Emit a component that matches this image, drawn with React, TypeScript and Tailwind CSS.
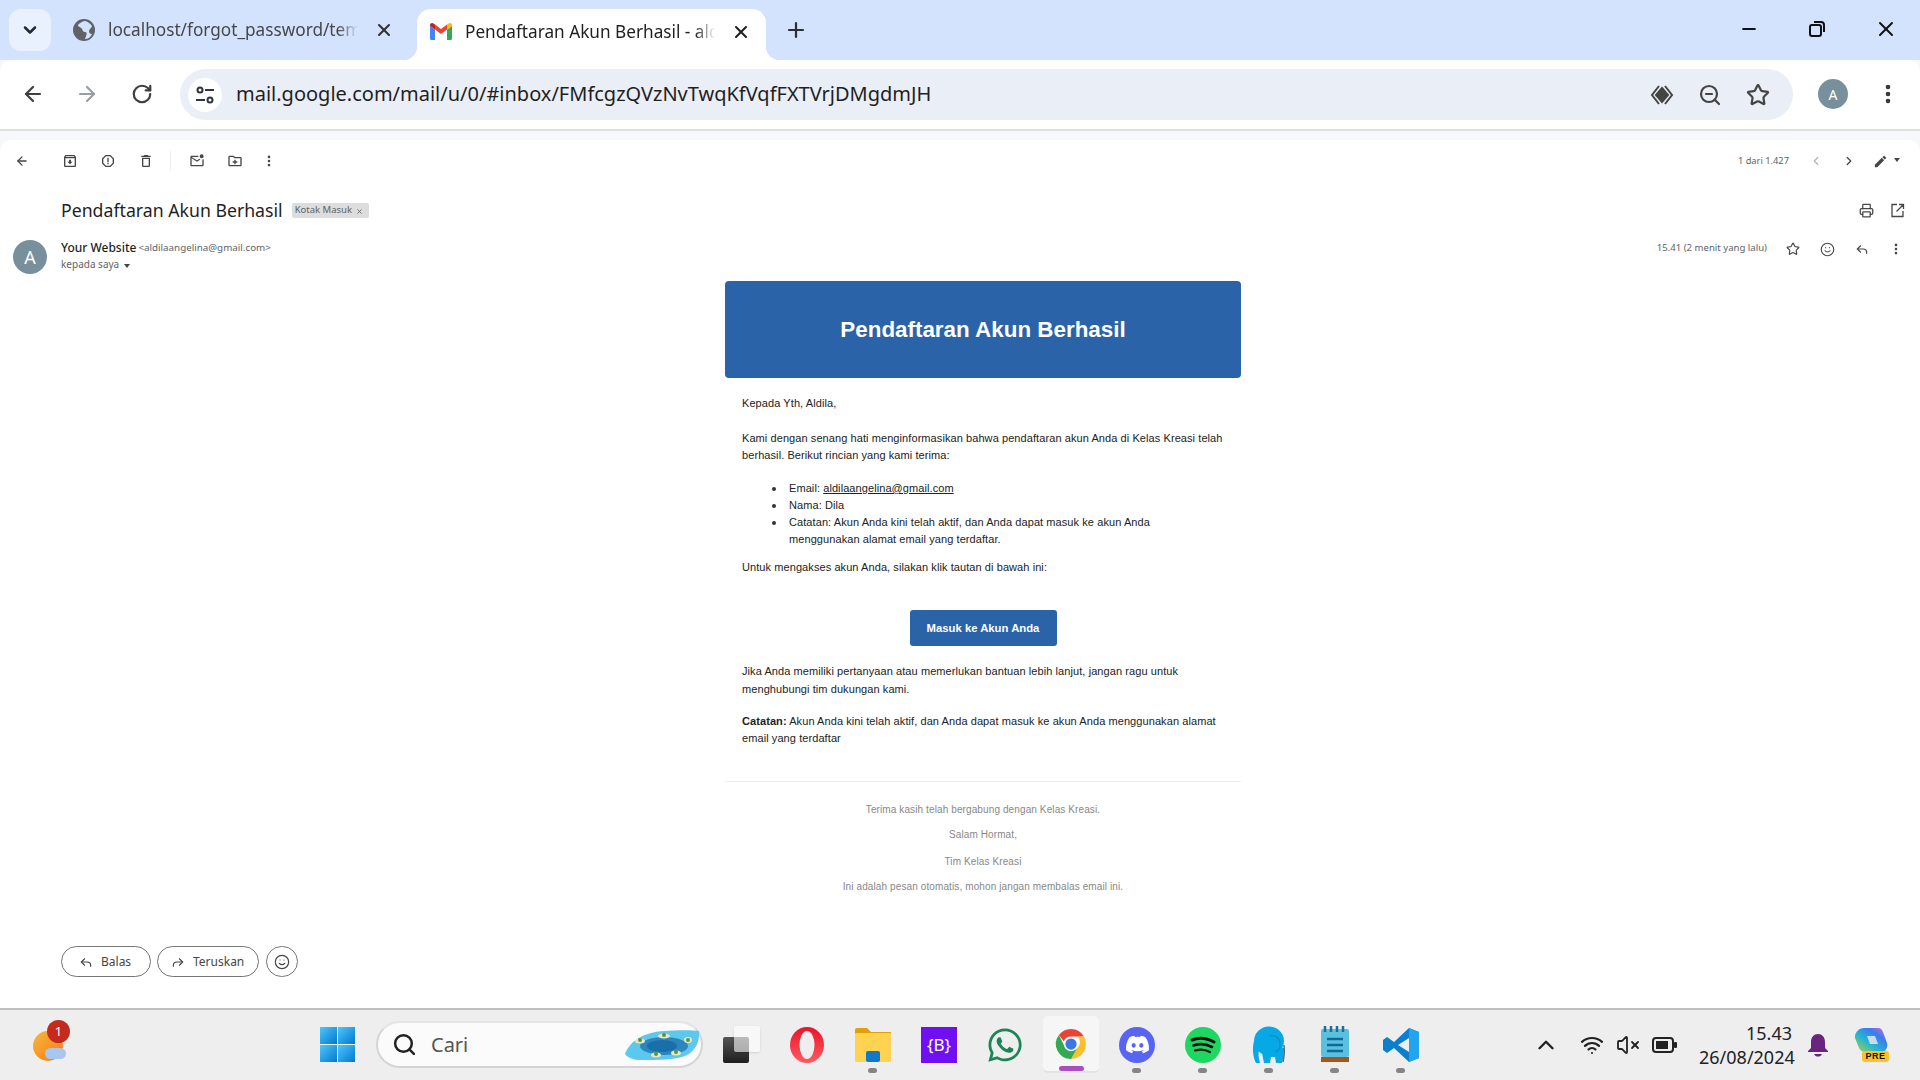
import React from "react";
import { ChevronDown, ChevronUp, ArrowLeft, ArrowRight, RotateCw, X, Plus, Minus, Star, ZoomOut, MoreVertical, Smile, Printer, ChevronLeft, ChevronRight, Search, Wifi, VolumeX } from "lucide-react";
import { FaDiscord, FaWhatsapp } from "react-icons/fa";

const UI = "font-['Noto_Sans','Open_Sans',sans-serif]";
const MAIL = "font-['Liberation_Sans',Arial,sans-serif]";

function M({ d, size = 16, className = "" }: { d: string; size?: number; className?: string }) {
  return (
    <svg width={size} height={size} viewBox="0 0 24 24" fill="currentColor" className={className}>
      <path d={d} fillRule="evenodd" />
    </svg>
  );
}

function ReplyArrow({ size = 14, flip = false }: { size?: number; flip?: boolean }) {
  return (
    <svg width={size} height={size} viewBox="0 0 24 24" fill="none" stroke="currentColor" strokeWidth="2" style={{ transform: flip ? "scaleX(-1)" : undefined }}>
      <path d="M10 6 4 12l6 6" />
      <path d="M4 12h10a6 6 0 0 1 6 6v2" />
    </svg>
  );
}

const GmailLogo = () => (
  <svg width="22" height="17" viewBox="0 0 22 17">
    <path d="M1.5 17A1.5 1.5 0 0 1 0 15.5V3l5 3.6V17z" fill="#4285f4" />
    <path d="M17 17V6.6L22 3v12.5a1.5 1.5 0 0 1-1.500 1.500z" fill="#34a853" />
    <path d="M17 1.500V6.600L22 3V2C22 .4 20 -.6 18.700 .4z" fill="#fbbc04" />
    <path d="M5 6.600V1.500L11 6l6-4.500v5.100L11 11z" fill="#ea4335" />
    <path d="M0 3V2C0 .4 2 -.6 3.300 .4L5 1.500v5.100z" fill="#c5221f" />
  </svg>
);

const Chrome = () => (
  <svg width="36" height="36" viewBox="0 0 48 48">
    <path d="M24 4a20 20 0 0 1 17.300 10H24a10 10 0 0 0-9.500 6.800L7.900 12A20 20 0 0 1 24 4z" fill="#ea4335" />
    <path d="M41.300 14A20 20 0 0 1 24 44l8.700-15a10 10 0 0 0 0-15z" fill="#fbc02d" />
    <path d="M24 44A20 20 0 0 1 7.900 12l8.400 17A10 10 0 0 0 32.700 29l-8.700 15z" fill="#34a853" />
    <circle cx="24" cy="24" r="9.500" fill="#fff" />
    <circle cx="24" cy="24" r="7.500" fill="#3b78e7" />
  </svg>
);

const Island = () => (
  <svg width="76" height="32" viewBox="0 0 76 32">
    <path d="M1 25C6 12 20 3 40 2c14-1 28-1 35 0 1 10-3 20-14 25-10 4-28 4-44 4C10 31 4 29 1 25z" fill="#5cc8ee" />
    <ellipse cx="40" cy="17" rx="24" ry="9" fill="#2a86bd" />
    <ellipse cx="38" cy="17" rx="15" ry="6" fill="#1a6fa8" />
    <ellipse cx="16" cy="12" rx="5" ry="2.500" fill="#f0e4c0" />
    <circle cx="16" cy="11" r="2" fill="#4c9a3e" />
    <ellipse cx="40" cy="7" rx="6" ry="2.500" fill="#f0e4c0" />
    <circle cx="40" cy="6" r="2" fill="#4c9a3e" />
    <ellipse cx="64" cy="11" rx="4" ry="3" fill="#f0e4c0" />
    <circle cx="64" cy="11" r="2" fill="#4c9a3e" />
    <ellipse cx="32" cy="26" rx="5" ry="2.500" fill="#f0e4c0" />
    <circle cx="32" cy="25" r="2" fill="#4c9a3e" />
    <ellipse cx="52" cy="24" rx="5" ry="2.500" fill="#f0e4c0" />
    <circle cx="52" cy="23" r="2" fill="#4c9a3e" />
  </svg>
);

function TaskIcon({ children, dot = false, active = false }: { children: React.ReactNode; dot?: boolean; active?: boolean }) {
  return (
    <div className={`relative w-[56px] h-[57px] mx-[5px] flex items-center justify-center rounded-[5px] ${active ? "bg-[#f6f6f6] border-b-2 border-[#e2e2e2]" : ""}`}>
      {children}
      {dot && <span className="absolute bottom-0 left-[23px] w-[9px] h-[5px] rounded-full bg-[#858585]" />}
      {active && <span className="absolute bottom-0 left-[16px] w-[25px] h-[5px] rounded-full bg-[#a94fc0]" />}
    </div>
  );
}

function Li({ children }: { children: React.ReactNode }) {
  return (
    <li className="relative">
      <span className="absolute left-[-17px] top-[7px] w-[3.500px] h-[3.500px] rounded-full bg-[#333]" />
      {children}
    </li>
  );
}

export default function App() {
  return (
    <div className={`w-[1920px] h-[1080px] overflow-hidden flex flex-col bg-[#f6f8fc] ${UI}`}>
      {/* Tab strip */}
      <div className="h-[60px] shrink-0 bg-[#d3e3fd] flex items-start pl-[9px] text-[#1f1f1f]">
        <div className="mt-[9px] w-[42px] h-[42px] rounded-[12px] bg-[#eaf1fe] flex items-center justify-center">
          <ChevronDown size={20} strokeWidth={3} className="text-[#1f2937]" />
        </div>
        <div className="ml-[21px] w-[345px] h-[60px] flex items-center">
          <svg width="24" height="24" viewBox="0 0 24 24" className="text-[#5f6368] shrink-0">
            <circle cx="12" cy="12" r="11" fill="currentColor" />
            <path d="M12 3c-2 1-5 2-6 4 0 2 3 2 4 4s1 3 3 3 2 2 1 4l-1 3c3 0 6-2 7-5-2 0-3-1-3-3s3-3 3-5c-2-3-5-5-8-5z" fill="#d3e3fd" />
          </svg>
          <span className="ml-[12px] w-[250px] text-[17.200px] leading-[24px] whitespace-nowrap overflow-hidden text-[#45474a] [mask-image:linear-gradient(to_right,black_92%,transparent)]">localhost/forgot_password/template</span>
          <X size={20} strokeWidth={2.5} className="ml-[16px] text-[#333]" />
        </div>
        <div className="relative mt-[9px] w-[349px] h-[51px] bg-white rounded-t-[14px] flex items-center pl-[13px] pb-[6px]">
          <span className="absolute -left-[14px] bottom-0 w-[14px] h-[14px] bg-[radial-gradient(circle_at_0_0,#d3e3fd_14px,white_14.500px)]" />
          <span className="absolute -right-[14px] bottom-0 w-[14px] h-[14px] bg-[radial-gradient(circle_at_100%_0,#d3e3fd_14px,white_14.500px)]" />
          <GmailLogo />
          <span className="ml-[13px] w-[250px] text-[17.200px] leading-[24px] whitespace-nowrap overflow-hidden text-[#1f1f1f] [mask-image:linear-gradient(to_right,black_92%,transparent)]">Pendaftaran Akun Berhasil - aldilaangelina</span>
          <X size={20} strokeWidth={2.5} className="ml-[16px] text-[#222]" />
        </div>
        <Plus size={24} strokeWidth={2.2} className="mt-[18px] ml-[18px] text-[#2b2f33]" />
        <div className="ml-auto flex items-center h-[60px] pb-[3px] text-[#111]">
          <Minus size={20} strokeWidth={2.5} className="mr-[49px]" />
          <svg width="18" height="18" viewBox="0 0 18 18" fill="none" stroke="currentColor" strokeWidth="2" className="mr-[48px]">
            <rect x="2" y="5" width="11" height="11" rx="2" />
            <path d="M6 2h7a3 3 0 0 1 3 3v7" />
          </svg>
          <X size={24} strokeWidth={2} className="mr-[22px]" />
        </div>
      </div>

      {/* Toolbar */}
      <div className="h-[71px] shrink-0 bg-white rounded-t-[12px] border-b-2 border-[#dfe1dd] flex items-start pt-[9px] pl-[21px] text-[#3c3f43]">
        <ArrowLeft size={24} strokeWidth={2.2} className="mt-[13px]" />
        <ArrowRight size={24} strokeWidth={2.2} className="mt-[13px] ml-[30px] text-[#9a9da1]" />
        <RotateCw size={22} strokeWidth={2.4} className="mt-[14px] ml-[32px]" />
        <div className="ml-[27px] w-[1613px] h-[51px] rounded-full bg-[#eaeef7] flex items-center pl-[8px] pr-[23px]">
          <div className="w-[34px] h-[34px] rounded-full bg-white flex items-center justify-center">
            <svg width="20" height="20" viewBox="0 0 20 20" fill="none" stroke="#303438" strokeWidth="2">
              <circle cx="5" cy="5" r="2.500" /><path d="M10 5h9M1 15h9" /><circle cx="15" cy="15" r="2.500" />
            </svg>
          </div>
          <span className="ml-[14px] mb-[1px] text-[20px] leading-[28px] text-[#1f1f1f] whitespace-nowrap">mail.google.com/mail/u/0/#inbox/FMfcgzQVzNvTwqKfVqfFXTVrjDMgdmJH</span>
          <div className="ml-auto flex items-center gap-[24px] text-[#444]">
            <svg width="24" height="24" viewBox="0 0 24 24" fill="none" stroke="currentColor" strokeWidth="2">
              <path d="M9 3 2 12l7 9M15 3l7 9-7 9" /><path d="m12 5 6 7-6 7-6-7z" fill="currentColor" />
            </svg>
            <ZoomOut size={24} strokeWidth={2.2} />
            <Star size={24} strokeWidth={2.2} />
          </div>
        </div>
        <div className="ml-[25px] mt-[10px] w-[30px] h-[30px] rounded-full bg-[#78909c] text-white text-[14px] flex items-center justify-center">A</div>
        <MoreVertical size={24} strokeWidth={2.6} className="mt-[13px] ml-[28px] text-[#333]" />
      </div>

      {/* Gmail panel */}
      <div className="mt-[9px] h-[868px] shrink-0 bg-white rounded-t-[12px] flex flex-col text-[#444746]">
        <div className="h-[42px] flex items-center pl-[15px] pr-[20px]">
          <ArrowLeft size={14} strokeWidth={2.2} />
          <M className="ml-[33px]" d="M20.54 5.23l-1.39-1.68C18.88 3.21 18.47 3 18 3H6c-.47 0-.88.21-1.16.55L3.46 5.23C3.17 5.57 3 6.02 3 6.500V19c0 1.100.9 2 2 2h14c1.100 0 2-.9 2-2V6.500c0-.48-.17-.93-.46-1.270zM6.240 5h11.520l.83 1H5.420l.82-1zM5 19V8h14v11H5zm8.450-9h-2.900v3H8l4 4 4-4h-2.550z" />
          <M className="ml-[22px]" d="M15.730 3H8.270L3 8.270v7.460L8.270 21h7.460L21 15.730V8.270L15.730 3zM19 14.900L14.900 19H9.100L5 14.900V9.100L9.100 5h5.800L19 9.100v5.800zM11 7h2v7h-2zM11 15h2v2h-2z" />
          <M className="ml-[22px]" d="M6 19c0 1.100.9 2 2 2h8c1.100 0 2-.9 2-2V7H6v12zM8 9h8v10H8V9zm7.500-5l-1-1h-5l-1 1H5v2h14V4z" />
          <span className="ml-[16px] w-px h-[20px] bg-[#eceff1]" />
          <M className="ml-[18px]" d="M22 8.980V18c0 1.100-.9 2-2 2H4c-1.100 0-2-.9-2-2V6c0-1.100.9-2 2-2h10.100c-.06.32-.1.66-.1 1 0 .34.04.68.1 1H4l8 5 3.670-2.290c.47.43 1.020.76 1.630.98L12 13 4 8v10h16V9.900c.74-.15 1.420-.48 2-.92zM19 8a3 3 0 1 0 0-6 3 3 0 0 0 0 6z" />
          <M className="ml-[22px]" d="M20 6h-8l-2-2H4c-1.100 0-2 .9-2 2v12c0 1.100.9 2 2 2h16c1.100 0 2-.9 2-2V8c0-1.100-.9-2-2-2zm0 12H4V6h5.170l2 2H20v10zM11 10h2v2.500h2.500v2H13V17h-2v-2.500H8.500v-2H11z" />
          <MoreVertical size={14} strokeWidth={2.5} className="ml-[19px]" />
          <span className="ml-auto mr-[2px] text-[9.300px] text-[#5f6368]">1 dari 1.427</span>
          <ChevronLeft size={14} className="ml-[18px] text-[#b0b3b6]" />
          <ChevronRight size={14} strokeWidth={2.2} className="ml-[19px]" />
          <M size={15} className="ml-[17px]" d="M3 17.250V21h3.750L17.810 9.940l-3.750-3.750L3 17.250zM20.710 7.040a1 1 0 0 0 0-1.410l-2.340-2.340a1 1 0 0 0-1.410 0l-1.830 1.830 3.750 3.750 1.830-1.830z" />
          <span className="ml-[6px] mb-[3px] w-0 h-0 border-x-[3px] border-t-[4px] border-x-transparent border-t-[#444]" />
        </div>

        <div className="h-[24px] mt-[16px] flex items-center pl-[61px] pr-[15px]">
          <span className="text-[17.700px] leading-[24px] text-[#1f1f1f]">Pendaftaran Akun Berhasil</span>
          <span className="ml-[9px] h-[15px] w-[77px] bg-[#dddddd] rounded-[2px] flex items-center pl-[3px] text-[9.500px] text-[#5f6368]">
            Kotak Masuk<X size={7} strokeWidth={3} className="ml-[4px] mt-[2px]" />
          </span>
          <Printer size={15} className="ml-auto" />
          <svg width="15" height="15" viewBox="0 0 15 15" fill="none" stroke="currentColor" strokeWidth="1.300" className="ml-[16px]">
            <path d="M7 1.500H2v12h11V8M9 1.500h4.500V6M13.500 1.500 6.500 8.500" />
          </svg>
        </div>

        <div className="h-[36px] mt-[18px] flex items-start pl-[13px] pr-[17px]">
          <div className="w-[34px] h-[34px] rounded-full bg-[#78909c] text-white text-[18px] flex items-center justify-center">A</div>
          <div className="ml-[14px]">
            <div className="h-[16px] flex items-center text-[12px] text-[#1f1f1f] font-medium">
              Your Website<span className="ml-[2px] text-[9.800px] font-normal text-[#5f6368]">&lt;aldilaangelina@gmail.com&gt;</span>
            </div>
            <div className="h-[17px] flex items-center text-[10px] text-[#5f6368]">
              kepada saya<span className="ml-[5px] mt-[2px] w-0 h-0 border-x-[3px] border-t-[4px] border-x-transparent border-t-[#444]" />
            </div>
          </div>
          <span className="ml-auto h-[16px] flex items-center text-[9.600px] text-[#5f6368]">15.41 (2 menit yang lalu)</span>
          <div className="ml-[19px] h-[18px] flex items-center">
            <Star size={14} strokeWidth={2} />
            <Smile size={15} strokeWidth={1.800} className="ml-[20px]" />
            <span className="ml-[20px]"><ReplyArrow size={14} /></span>
            <MoreVertical size={14} strokeWidth={2.5} className="ml-[20px]" />
          </div>
        </div>

        {/* Email body */}
        <div className={`ml-[725px] mt-[5px] w-[516px] text-[11px] leading-[17px] tracking-[0.08px] text-[#222] ${MAIL}`}>
          <div className="h-[97px] bg-[#2a63a8] rounded-[4px] flex items-center justify-center text-white text-[22.400px] tracking-normal font-bold">Pendaftaran Akun Berhasil</div>
          <div className="px-[17px]">
            <p className="mt-[17px]">Kepada Yth, Aldila,</p>
            <p className="mt-[18px]">Kami dengan senang hati menginformasikan bahwa pendaftaran akun Anda di Kelas Kreasi telah berhasil. Berikut rincian yang kami terima:</p>
            <ul className="mt-[16px] pl-[47px] pr-[40px]">
              <Li>Email: <span className="underline">aldilaangelina@gmail.com</span></Li>
              <Li>Nama: Dila</Li>
              <Li>Catatan: Akun Anda kini telah aktif, dan Anda dapat masuk ke akun Anda menggunakan alamat email yang terdaftar.</Li>
            </ul>
            <p className="mt-[11px]">Untuk mengakses akun Anda, silakan klik tautan di bawah ini:</p>
            <div className="mt-[34px] flex justify-center">
              <div className="w-[147px] h-[36px] bg-[#2a63a8] rounded-[3px] text-white font-bold text-[11.300px] tracking-normal flex items-center justify-center">Masuk ke Akun Anda</div>
            </div>
            <p className="mt-[16px] leading-[18px]">Jika Anda memiliki pertanyaan atau memerlukan bantuan lebih lanjut, jangan ragu untuk menghubungi tim dukungan kami.</p>
            <p className="mt-[15px]"><b>Catatan:</b> Akun Anda kini telah aktif, dan Anda dapat masuk ke akun Anda menggunakan alamat email yang terdaftar</p>
          </div>
          <div className="mt-[34px] border-t border-[#eeeeee] flex flex-col items-center text-[10px] tracking-[0.11px] text-[#888]">
            <p className="mt-[19px]">Terima kasih telah bergabung dengan Kelas Kreasi.</p>
            <p className="mt-[8px]">Salam Hormat,</p>
            <p className="mt-[10px]">Tim Kelas Kreasi</p>
            <p className="mt-[8px]">Ini adalah pesan otomatis, mohon jangan membalas email ini.</p>
          </div>
        </div>

        <div className="mt-[51px] ml-[61px] flex gap-[6px] text-[12px] text-[#444746]">
          <div className="w-[90px] h-[31px] rounded-full border border-[#747775] flex items-center pl-[17px]">
            <ReplyArrow size={14} /><span className="ml-[8px]">Balas</span>
          </div>
          <div className="w-[102px] h-[31px] rounded-full border border-[#747775] flex items-center pl-[13px]">
            <ReplyArrow size={14} flip /><span className="ml-[8px]">Teruskan</span>
          </div>
          <div className="ml-[1px] w-[32px] h-[31px] rounded-full border border-[#747775] flex items-center justify-center">
            <Smile size={16} strokeWidth={1.800} />
          </div>
        </div>
      </div>

      {/* Taskbar */}
      <div className="flex-1 bg-[#eeeeee] border-t-2 border-[#bfbfbf] relative flex items-center pb-[1px]">
        <div className="relative ml-[33px] w-[33px] h-[33px] mt-[6px]">
          <span className="absolute left-0 top-0 w-[30px] h-[30px] rounded-full bg-[linear-gradient(135deg,#f6b73c,#f57c14)]" />
          <span className="absolute left-[12px] top-[17px] w-[21px] h-[11px] rounded-full bg-[#a9c6ee]" />
          <span className="absolute left-[14px] -top-[11px] w-[23px] h-[23px] rounded-full bg-[#c42b1c] text-white text-[13px] flex items-center justify-center">1</span>
        </div>
        <svg width="35" height="35" viewBox="0 0 35 35" className="ml-[254px]">
          <defs><linearGradient id="w" x1="0" y1="0" x2="1" y2="1"><stop offset="0" stopColor="#4fc6f8" /><stop offset="1" stopColor="#0078d4" /></linearGradient></defs>
          <rect x="0" y="0" width="17" height="17" fill="url(#w)" /><rect x="18" y="0" width="17" height="17" fill="url(#w)" />
          <rect x="0" y="18" width="17" height="17" fill="url(#w)" /><rect x="18" y="18" width="17" height="17" fill="url(#w)" />
        </svg>
        <div className="ml-[21px] w-[327px] h-[47px] rounded-full bg-[#fbfbfb] border-2 border-[#d4d4d4] border-t-[#e4e4e4] flex items-center pl-[14px] pr-[1px]">
          <Search size={25} strokeWidth={2.4} className="text-[#222]" />
          <span className="ml-[14px] text-[20px] text-[#555]">Cari</span>
          <span className="ml-auto flex"><Island /></span>
        </div>
        <div className="relative ml-[20px] w-[37px] h-[37px]">
          <span className="absolute left-0 bottom-0 w-[26px] h-[26px] rounded-[2px] bg-[linear-gradient(#555,#1e1e1e)]" />
          <span className="absolute right-0 top-0 w-[26px] h-[26px] rounded-[2px] bg-[#ffffff]/60 shadow-sm" />
        </div>
        <div className="ml-[14px] flex items-center">
          <TaskIcon>
            <svg width="34" height="36" viewBox="0 0 34 36"><defs><linearGradient id="o" x1="0" y1="0" x2="0" y2="1"><stop offset="0" stopColor="#e8142b" /><stop offset="1" stopColor="#ff5a5f" /></linearGradient></defs><ellipse cx="17" cy="18" rx="17" ry="18" fill="url(#o)" /><ellipse cx="17" cy="18" rx="7.500" ry="14" fill="#eeeeee" /></svg>
          </TaskIcon>
          <TaskIcon dot>
            <svg width="36" height="36" viewBox="0 0 36 36"><path d="M0 3a2 2 0 0 1 2-2h10l4 4h20v3H0z" fill="#e0a106" /><rect y="6" width="36" height="29" rx="1" fill="#ffd351" /><rect x="11" y="24" width="14" height="11" rx="2" fill="#0f78c9" /></svg>
          </TaskIcon>
          <TaskIcon>
            <div className="w-[36px] h-[36px] bg-[#7010f2] text-white text-[17px] font-normal flex items-center justify-center">{"{B}"}</div>
          </TaskIcon>
          <TaskIcon><FaWhatsapp size={38} color="#1c8557" /></TaskIcon>
          <TaskIcon active><Chrome /></TaskIcon>
          <TaskIcon dot>
            <div className="w-[36px] h-[36px] rounded-full bg-[#5865f2] flex items-center justify-center"><FaDiscord size={25} color="#fff" /></div>
          </TaskIcon>
          <TaskIcon dot>
            <div className="w-[36px] h-[36px] rounded-full bg-[#1ed760] flex items-center justify-center">
              <svg width="26" height="20" viewBox="0 0 26 20" fill="none" stroke="#111" strokeLinecap="round"><path d="M2 5c7-3 15-2 22 2" strokeWidth="3" /><path d="M3.500 10.500c6-2 13-1.500 18.500 1.500" strokeWidth="2.600" /><path d="M5 15.500c5-1.500 10.500-1 15 1.500" strokeWidth="2.200" /></svg>
            </div>
          </TaskIcon>
          <TaskIcon dot>
            <svg width="34" height="38" viewBox="0 0 34 38">
              <ellipse cx="17" cy="15" rx="15" ry="14.500" fill="#07a8e6" />
              <path d="M2 15c-2 8-1 16 2 22h4c-2-6-2-12 0-18z" fill="#07a8e6" />
              <path d="M10 22h22c0 6-1 11-2 15h-6l-1-6h-4l-1 6h-6l-2-10z" fill="#07a8e6" />
              <path d="M17 10c6-2 11 2 11 9 0 4-2 6-5 7" fill="none" stroke="#0a8fca" strokeWidth="1.500" />
              <path d="M31 36c1-5 2-10 1-17" stroke="#5b6b78" strokeWidth="1.500" fill="none" />
            </svg>
          </TaskIcon>
          <TaskIcon dot>
            <svg width="28" height="37" viewBox="0 0 28 37"><rect x="0" y="3" width="28" height="28" rx="2" fill="#5bbfe0" /><rect x="0" y="31" width="28" height="5" fill="#a4561c" /><path d="M4 0v6M10 0v6M16 0v6M22 0v6" stroke="#1c6f94" strokeWidth="2.500" /><path d="M6 13h16M6 19h16M6 25h16" stroke="#0d6c93" strokeWidth="2.500" /></svg>
          </TaskIcon>
          <TaskIcon dot>
            <svg width="36" height="36" viewBox="0 0 36 36"><path d="M26 1 11 15 4 10 0 13v10l4 3 7-5 15 14 10-4V5z" fill="#0a7fd0" /><path d="M26 1v34l10-4V5z" fill="#22a5ee" /><path d="M26 11 15 18l11 7z" fill="#eeeeee" /></svg>
          </TaskIcon>
        </div>
        <div className="ml-auto flex items-center text-[#222]">
          <ChevronUp size={26} strokeWidth={2.2} />
          <Wifi size={24} strokeWidth={2.2} className="ml-[21px]" />
          <VolumeX size={24} strokeWidth={1.800} className="ml-[12px]" />
          <svg width="25" height="16" viewBox="0 0 25 16" fill="none" className="ml-[12px]">
            <rect x="1" y="1" width="20" height="14" rx="3" stroke="#222" strokeWidth="2" /><rect x="4" y="4" width="12" height="8" fill="#222" /><rect x="22" y="5" width="3" height="6" rx="1" fill="#222" />
          </svg>
          <div className="ml-[22px] w-[93px] text-right text-[18px] leading-[24px]">
            <div>15.43</div><div>26/08/2024</div>
          </div>
          <svg width="22" height="24" viewBox="0 0 22 24" className="ml-[15px]"><path d="M11 1c4 0 7 3 7 8v6l3 3v1H1v-1l3-3V9c0-5 3-8 7-8zM7 21h8c-1 2-2 2.500-4 2.500S8 23 7 21z" fill="#6b2380" /></svg>
          <div className="relative ml-[25px] mr-[30px] w-[36px] h-[35px]">
            <svg width="34" height="26" viewBox="0 0 34 26">
              <defs><linearGradient id="c" x1="0" y1="1" x2="1" y2="0"><stop offset="0" stopColor="#b5d336" /><stop offset=".4" stopColor="#25b6d2" /><stop offset=".7" stopColor="#3a7bf0" /><stop offset="1" stopColor="#e06ad8" /></linearGradient></defs>
              <path d="M10 1h14c3 0 4 2 5 4l4 11c1 4-1 9-6 9H11c-3 0-5-2-6-4L1 11C0 6 5 1 10 1z" fill="url(#c)" />
              <path d="M13 9h8l3 8h-8z" fill="#eeeeee" opacity=".8" />
            </svg>
            <span className={`absolute left-[8px] bottom-0 w-[27px] h-[11px] rounded-[3px] bg-[#fbc02d] text-[#111] text-[9px] leading-[11px] font-bold text-center tracking-[0.5px] ${MAIL}`}>PRE</span>
          </div>
        </div>
      </div>
    </div>
  );
}
